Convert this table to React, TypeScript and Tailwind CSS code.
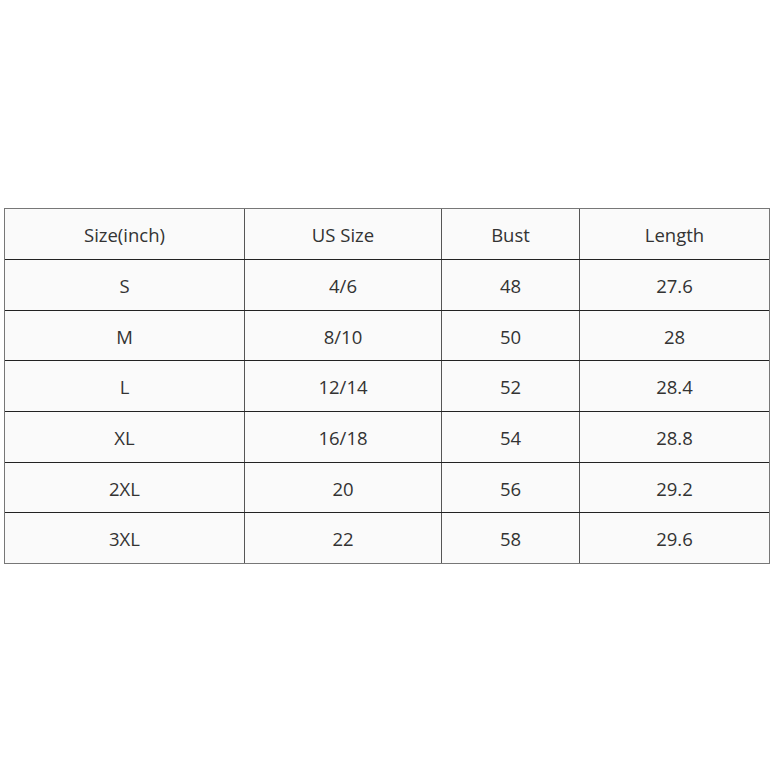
import React from "react";

const header = ["Size(inch)", "US Size", "Bust", "Length"];
const rows = [
  ["S", "4/6", "48", "27.6"],
  ["M", "8/10", "50", "28"],
  ["L", "12/14", "52", "28.4"],
  ["XL", "16/18", "54", "28.8"],
  ["2XL", "20", "56", "29.2"],
  ["3XL", "22", "58", "29.6"],
];

const heights = ["h-[50px]", "h-[50px]", "h-[49px]", "h-[50px]", "h-[50px]", "h-[49px]", "h-[50px]"];

function Row({ cells, h, last }: { cells: string[]; h: string; last: boolean }) {
  return (
    <div className={`flex ${last ? "" : "border-b border-[#222]"}`}>
      <div className={`${h} w-[240px] border-r border-[#555] flex items-center justify-center pt-[2px]`}>{cells[0]}</div>
      <div className={`${h} w-[197px] border-r border-[#555] flex items-center justify-center pt-[2px]`}>{cells[1]}</div>
      <div className={`${h} w-[138px] border-r border-[#555] flex items-center justify-center pt-[2px]`}>{cells[2]}</div>
      <div className={`${h} w-[189px] flex items-center justify-center pt-[2px]`}>{cells[3]}</div>
    </div>
  );
}

export default function App() {
  const all = [header, ...rows];
  return (
    <div className="w-[771px] h-[771px] bg-white pt-[208px] pl-[4px]" style={{ fontFamily: '"Open Sans", "Noto Sans", sans-serif' }}>
      <div className="w-[766px] border border-[#777] bg-[#fafafa] text-[18.5px] text-[#333]">
        {all.map((r, i) => (
          <Row key={i} cells={r} h={heights[i]} last={i === all.length - 1} />
        ))}
      </div>
    </div>
  );
}
